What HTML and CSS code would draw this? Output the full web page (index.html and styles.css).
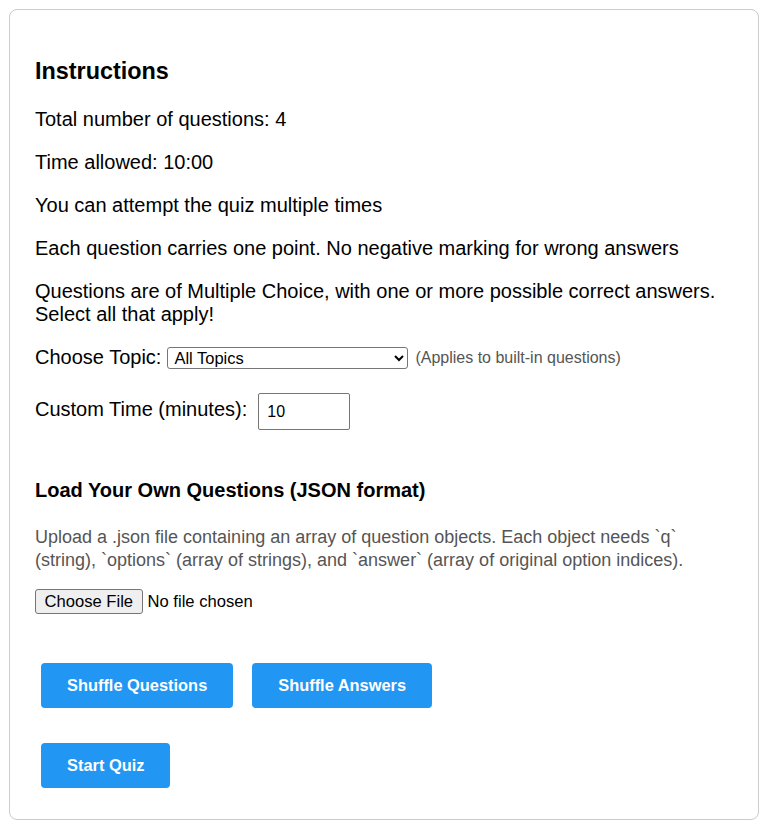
FILE: index.html
```html
<!DOCTYPE html>
<html lang="en">
<head>
<meta charset="utf-8">
<title>Quiz Instructions</title>
<link rel="stylesheet" href="styles.css">
</head>
<body>
<div class="card">
  <h3 class="title">Instructions</h3>
  <p class="line first">Total number of questions: 4</p>
  <p class="line">Time allowed: 10:00</p>
  <p class="line">You can attempt the quiz multiple times</p>
  <p class="line">Each question carries one point. No negative marking for wrong answers</p>
  <p class="line">Questions are of Multiple Choice, with one or more possible correct answers. Select all that apply!</p>
  <div class="topic-row">
    <label for="topic">Choose Topic:</label>
    <select id="topic" class="topic-select">
      <option>All Topics</option>
    </select>
    <span class="note">(Applies to built-in questions)</span>
  </div>
  <div class="time-row">
    <label for="time">Custom Time (minutes):</label>
    <input id="time" class="time-input" type="text" value="10">
  </div>
  <h4 class="subtitle">Load Your Own Questions (JSON format)</h4>
  <p class="desc">Upload a .json file containing an array of question objects. Each object needs `q` (string), `options` (array of strings), and `answer` (array of original option indices).</p>
  <div class="file-row">
    <button class="file-btn" type="button">Choose File</button>
    <span class="file-name">No file chosen</span>
  </div>
  <div class="btn-row shuffle">
    <button class="btn" type="button">Shuffle Questions</button>
    <button class="btn" type="button">Shuffle Answers</button>
  </div>
  <div class="btn-row start">
    <button class="btn" type="button">Start Quiz</button>
  </div>
</div>
</body>
</html>
```
FILE: styles.css
```css
html, body {
  margin: 0;
  padding: 0;
  background: #fff;
}
body {
  font-family: "Liberation Sans", Arial, sans-serif;
  font-size: 20px;
  color: #000;
}
.card {
  margin: 9px 13px 0 9px;
  border: 1px solid #cccccc;
  border-radius: 8px;
  padding: 25px;
  height: 759px;
}
.title {
  margin: 23px 0 0;
  font-size: 23.4px;
  line-height: 27px;
  font-weight: bold;
}
.line {
  margin: 20px 0 0;
  line-height: 23px;
}
.line.first {
  margin-top: 23px;
}
.topic-row {
  margin-top: 19px;
  display: flex;
  align-items: center;
  height: 24px;
}
.topic-row label {
  margin-right: 6px;
}
.topic-select {
  width: 241px;
  height: 22px;
  font-family: "Liberation Sans", Arial, sans-serif;
  font-size: 16.5px;
  color: #000;
  border: 1px solid #767676;
  border-radius: 3px;
  background: #fff;
  padding: 0 2px;
  margin: 2px 0 0;
}
.note {
  margin-left: 7px;
  font-size: 16px;
  color: #555;
  margin-top: 2px;
}
.time-row {
  margin-top: 24px;
  display: flex;
  align-items: center;
}
.time-row label {
  margin: 0 11px 4px 0;
  line-height: 23px;
}
.time-input {
  box-sizing: border-box;
  width: 92px;
  height: 37px;
  margin: 0;
  padding: 0 8px;
  font-family: "Liberation Sans", Arial, sans-serif;
  font-size: 16px;
  border: 1px solid #767676;
  border-radius: 2px;
  color: #000;
}
.subtitle {
  margin: 49px 0 0;
  font-size: 20px;
  line-height: 23px;
  font-weight: bold;
}
.desc {
  margin: 24px 0 0;
  font-size: 18px;
  line-height: 23px;
  color: #555;
}
.file-row {
  margin-top: 17px;
  display: flex;
  align-items: center;
  height: 25px;
}
.file-btn {
  box-sizing: border-box;
  height: 25px;
  padding: 0 8.5px;
  margin: 0 5px 0 0;
  font-family: "Liberation Sans", Arial, sans-serif;
  font-size: 16.6px;
  color: #000;
  background: #efefef;
  border: 1px solid #767676;
  border-radius: 3px;
}
.file-name {
  font-size: 16.6px;
}
.btn-row {
  display: flex;
  gap: 19px;
  padding-left: 6px;
}
.btn-row.shuffle {
  margin-top: 49px;
}
.btn-row.start {
  margin-top: 35px;
}
.btn {
  height: 45px;
  padding: 0 26px;
  border: none;
  border-radius: 4px;
  background: #2196f3;
  color: #fff;
  font-family: "Liberation Sans", Arial, sans-serif;
  font-size: 16.4px;
  font-weight: bold;
  margin: 0;
}
```
